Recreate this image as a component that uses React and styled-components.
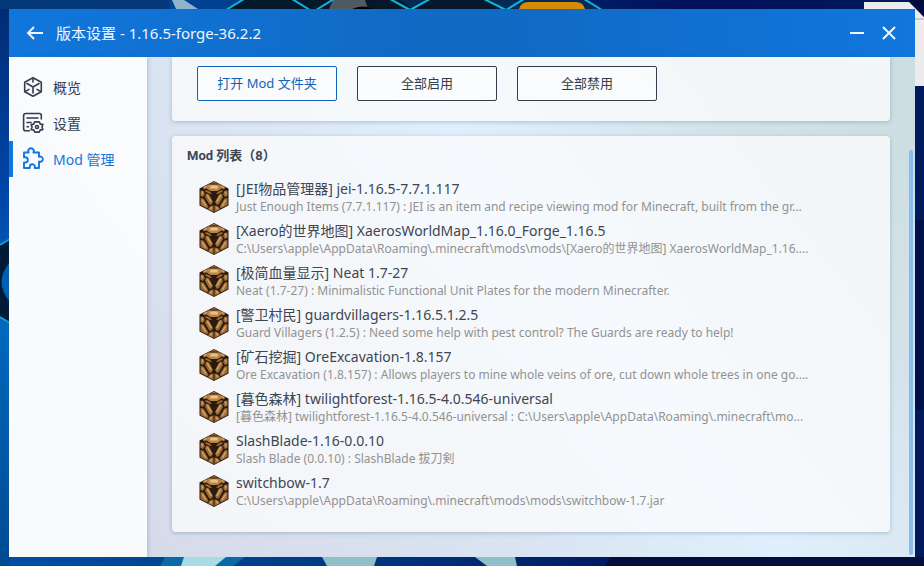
import React from "react";
import styled, { createGlobalStyle } from "styled-components";

const Global = createGlobalStyle`
  * { box-sizing: border-box; }
  body { margin: 0; font-family: "Noto Sans", "Noto Sans CJK SC", sans-serif; color: #3d4652; }
  button { font: inherit; color: inherit; cursor: pointer; }
`;

const Desktop = styled.div`
  display: flex;
  min-height: 100vh;
  padding: 9px;
  position: relative;
  background: #003f91;
`;

const WallpaperArt = styled.svg`
  position: absolute;
  inset: 0;
  width: 100%;
  height: 100%;
`;

const Window = styled.div`
  position: relative;
  flex: 1;
  min-width: 0;
  display: flex;
  flex-direction: column;
  background: linear-gradient(52deg, #d4dae7 5%, #d8deed 22%, #d9e3f1 38%, #e0effd 58%, #d3e2e9 80%, #ccdee1 94%);
`;

const TitleBar = styled.header`
  display: flex;
  align-items: center;
  height: 48px;
  padding: 0 10px 0 14px;
  background: linear-gradient(90deg, #1176db, #1069c2 50%, #1176dd);
  color: #eef6ff;
`;

const WindowTitle = styled.h1`
  flex: 1;
  margin: 0 0 0 9px;
  font-size: 15px;
  font-weight: 400;
  line-height: 24px;
`;

const BarButton = styled.button`
  display: flex;
  align-items: center;
  justify-content: center;
  width: 32px;
  height: 32px;
  padding: 0;
  border: 0;
  background: none;
  svg { display: block; }
`;

const BackButton = styled(BarButton)`
  width: 24px;
`;

const Body = styled.div`
  flex: 1;
  display: flex;
  min-height: 0;
`;

const Sidebar = styled.nav`
  width: 138px;
  padding-top: 12px;
  background: rgba(255, 255, 255, 0.85);
  box-shadow: 1px 0 4px rgba(60, 90, 140, 0.25);
`;

const NavItem = styled.button`
  display: flex;
  align-items: center;
  gap: 7px;
  width: 100%;
  height: 36px;
  padding: 0 0 0 9px;
  border: 0;
  border-left: 4px solid ${(p) => (p.$active ? "#1177dc" : "transparent")};
  background: none;
  color: ${(p) => (p.$active ? "#1177dc" : "#343d4a")};
  font-size: 14px;
  svg { display: block; }
`;

const NavLabel = styled.span`
  padding-bottom: 1px;
`;

const Content = styled.main`
  flex: 1;
  min-width: 0;
  display: flex;
  flex-direction: column;
  gap: 15px;
  padding: 0 19px 25px 25px;
`;

const Card = styled.section`
  padding: 10px 15px 20px;
  border-radius: ${(p) => (p.$flush ? "0 0 4px 4px" : "4px")};
  background: rgba(252, 252, 253, 0.77);
  box-shadow: 0 1px 4px rgba(50, 85, 125, 0.3);
`;

const ActionCard = styled(Card)`
  display: flex;
  gap: 20px;
  padding: 9px 25px 20px;
`;

const ActionButton = styled.button`
  width: 140px;
  height: 35px;
  padding: 0 0 2px;
  border: 1px solid currentColor;
  border-radius: 2px;
  background: rgba(255, 255, 255, 0.45);
  color: ${(p) => (p.$primary ? "#0f64b8" : "#343d4a")};
  font-size: 13px;
`;

const CardTitle = styled.h2`
  margin: 0 0 10px;
  font-family: Roboto, "Noto Sans CJK SC", sans-serif;
  font-size: 13px;
  font-weight: 700;
  line-height: 20px;
`;

const ModList = styled.ul`
  margin: 0;
  padding: 0 0 0 12px;
  list-style: none;
`;

const ModRow = styled.li`
  display: flex;
  gap: 7px;
  height: 42px;
  padding-top: 4px;
`;

const LampIcon = styled.svg`
  flex: none;
  width: 30px;
  height: 32px;
  margin-top: 1px;
`;

const ModText = styled.div`
  min-width: 0;
`;

const ModName = styled.div`
  font-size: 14px;
  line-height: 18px;
  white-space: nowrap;
`;

const ModInfo = styled.div`
  color: #929292;
  font-size: 12px;
  line-height: 18px;
  white-space: nowrap;
`;

const ScrollRail = styled.div`
  display: flex;
  width: 6px;
  padding: 93px 2px 2px 0;
`;

const ScrollThumb = styled.div`
  flex: 1;
  border-radius: 2px;
  background: #88bdec;
`;

function Wallpaper() {
  return (
    <WallpaperArt viewBox="0 0 924 566" preserveAspectRatio="none" aria-hidden="true">
      <defs>
        <linearGradient id="sky" x1="0" x2="1">
          <stop offset="0" stopColor="#004fa5" />
          <stop offset=".35" stopColor="#003b85" />
          <stop offset=".75" stopColor="#00115a" />
          <stop offset="1" stopColor="#001a5c" />
        </linearGradient>
        <linearGradient id="edge" x1="0" x2="0" y1="0" y2="1">
          <stop offset="0" stopColor="#002b72" />
          <stop offset=".35" stopColor="#0047aa" />
          <stop offset=".55" stopColor="#006ac0" />
          <stop offset="1" stopColor="#004a92" />
        </linearGradient>
      </defs>
      <rect width="924" height="566" fill="url(#sky)" />
      <rect width="10" height="566" fill="url(#edge)" />
      <path d="M0 0H170V9H0z" fill="#06397b" />
      <path d="M172 0h12l14 9h-22z" fill="#8fb5cc" />
      <path d="M242 0h280v9H228z" fill="#04182c" />
      <path d="M333 0h32l3 9h-39z" fill="#505a62" />
      <path d="M352 9q10-5 22 0z" fill="#000" />
      <path d="M400 0l13 9 16-9h60l17 9h92l-14-9z" fill="#032a52" />
      <path d="M226 10 244-1M292-1l18 11M316 10l18-11M390-1l20 11 20-11M484-1l22 11 18-11M584-1l18 11" fill="none" stroke="#12b5dc" strokeWidth="2" />
      <path d="M519 9q2-7 9-7h48q7 0 9 7z" fill="#d58b05" />
      <path d="M864 2h45l15 15v69h-10V9h-50z" fill="#ececec" />
      <path d="M909 0h15v17z" fill="#000a3d" />
      <path d="M915 19h9" stroke="#aaa" />
      <path d="M0 245l10-6v84l-10-6z" fill="#001a38" />
      <path d="M0 245l10-6M0 317l10 6" stroke="#159ad5" strokeWidth="2" />
      <path d="M10 262q-17 20 0 40z" fill="#0060b0" />
      <path d="M165 557h80l-12 9H160z" fill="#0a6aa8" />
      <path d="M184 557h42l-11 9h-34z" fill="#a9dbe5" />
      <path d="M322 557h55l-3 9h-47zM475 557h40l2 9h-30z" fill="#92bec9" />
      <path d="M610 557h314v9H605z" fill="#020e3b" />
      <path d="M915 220h9v190h-9z" fill="#001048" />
    </WallpaperArt>
  );
}

function Lamp() {
  return (
    <LampIcon viewBox="0 0 30 32" aria-hidden="true">
      <path d="M15 0l14.500 7.500v17L15 32 .5 24.500v-17z" fill="#2a190e" />
      <g fill="#9a6a36">
        <path d="M10.500 2.600 15 .8l4.500 1.800zM3.500 6.500l6-3-2 4-2.500 1zM26.500 6.500l-6-3 2 4 2.500 1zM7 9l3 1 3 2.500-2 .5-5-2.500zM23 9l-3 1-3 2.500 2 .5 5-2.500z" />
        <path d="M1.500 9.500l3 .5 1.500 3-2 3-2.500-1zM28.500 9.500l-3 .5-1.500 3 2 3 2.500-1z" />
        <path d="M7 12.500l3 1 4 7.500-2 3-2-1-4-7zM23 12.500l-3 1-4 7.500 2 3 2-1 4-7z" />
        <path d="M1.500 17l3 .5 5 8-1.500 2-6.500-3.500zM28.500 17l-3 .5-5 8 1.500 2 6.500-3.500z" />
        <path d="M9 28.200q1.500-3.700 5.500-3.700V31zM21 28.200q-1.500-3.700-5.500-3.700V31z" />
      </g>
      <path d="M9 3.500h12l1.500 4-4 2.500h-7l-4-2.500z" fill="#b98448" />
      <path d="M11.500 4.500h7l.5 3h-8z" fill="#e9c283" />
      <g fill="none" stroke="#d29e5c" strokeWidth="1.600" strokeLinecap="round">
        <path d="M5.500 6.500l2-1M24.500 6.500l-2-1M3.500 11l-.5 2M26.500 11l.5 2M8.500 14.500l3.500 6M21.500 14.500l-3.500 6M3.500 19.500l3 5M26.500 19.500l-3 5M12.500 26.500l-1 1.500M17.500 26.500l1 1.500" />
      </g>
    </LampIcon>
  );
}

const line = {
  fill: "none",
  stroke: "currentColor",
  strokeWidth: 1.6,
  strokeLinecap: "round",
  strokeLinejoin: "round",
  width: 24,
  height: 24,
  viewBox: "0 0 24 24",
  "aria-hidden": true,
};

function CubeIcon() {
  return (
    <svg {...line}>
      <path d="M11 2.800 19.300 7.200v9.600L11 21.200l-8.300-4.400V7.200z" />
      <path d="M11 3v4M5 8.500l6 3.500 6-3.500M11 12v6M3.500 16.400l3.500-2M18.500 16.400l-3.500-2" />
    </svg>
  );
}

function SettingsIcon() {
  return (
    <svg {...line}>
      <path d="M19.300 8V4.500a2 2 0 0 0-2-2H3.600a2 2 0 0 0-2 2v13.300a2 2 0 0 0 2 2H7.500M5 7h11M5 11.500h4M5 15.800h1.500" />
      <path d="M12.700 10.900h4.600l1 2.200 2.500.3 0 .4 -.8 2.200 .8 2.200-.2.400-2.300.3-1.100 2.200h-4.400l-1.100-2.200-2.400-.3-.1-.4 .9-2.200-.9-2.200 .1-.4 2.400-.3z" />
      <circle cx="15" cy="16" r="1.500" />
    </svg>
  );
}

function PuzzleIcon() {
  return (
    <svg {...line} strokeWidth="1.900">
      <path d="M2 5.500h4.600a2.800 2.800 0 1 1 4.800 0H17v4.400a2.600 2.600 0 1 1 0 4.600V21h-4.200v-1.300a2.500 2.500 0 0 0-5 0V21H2v-5.500h1.200a2.600 2.600 0 0 0 0-5.200H2z" />
    </svg>
  );
}

const navItems = [
  { label: "概览", Icon: CubeIcon },
  { label: "设置", Icon: SettingsIcon },
  { label: "Mod 管理", Icon: PuzzleIcon, active: true },
];

const mods = [
  ["[JEI物品管理器] jei-1.16.5-7.7.1.117", "Just Enough Items (7.7.1.117) : JEI is an item and recipe viewing mod for Minecraft, built from the gr..."],
  ["[Xaero的世界地图] XaerosWorldMap_1.16.0_Forge_1.16.5", "C:\\Users\\apple\\AppData\\Roaming\\.minecraft\\mods\\mods\\[Xaero的世界地图] XaerosWorldMap_1.16...."],
  ["[极简血量显示] Neat 1.7-27", "Neat (1.7-27) : Minimalistic Functional Unit Plates for the modern Minecrafter."],
  ["[警卫村民] guardvillagers-1.16.5.1.2.5", "Guard Villagers (1.2.5) : Need some help with pest control? The Guards are ready to help!"],
  ["[矿石挖掘] OreExcavation-1.8.157", "Ore Excavation (1.8.157) : Allows players to mine whole veins of ore, cut down whole trees in one go...."],
  ["[暮色森林] twilightforest-1.16.5-4.0.546-universal", "[暮色森林] twilightforest-1.16.5-4.0.546-universal : C:\\Users\\apple\\AppData\\Roaming\\.minecraft\\mo..."],
  ["SlashBlade-1.16-0.0.10", "Slash Blade (0.0.10) : SlashBlade 拔刀剣"],
  ["switchbow-1.7", "C:\\Users\\apple\\AppData\\Roaming\\.minecraft\\mods\\mods\\switchbow-1.7.jar"],
];

export default function App() {
  return (
    <>
      <Global />
      <Desktop>
        <Wallpaper />
        <Window>
          <TitleBar>
            <BackButton aria-label="返回">
              <svg width="18" height="16" viewBox="0 0 18 16" fill="none" stroke="currentColor" strokeWidth="2">
                <path d="M17 8H2M8 2 2 8l6 6" />
              </svg>
            </BackButton>
            <WindowTitle>版本设置 - 1.16.5-forge-36.2.2</WindowTitle>
            <BarButton aria-label="最小化">
              <svg width="14" height="14" viewBox="0 0 14 14" stroke="currentColor" strokeWidth="2">
                <path d="M0 7h14" />
              </svg>
            </BarButton>
            <BarButton aria-label="关闭">
              <svg width="14" height="14" viewBox="0 0 14 14" stroke="currentColor" strokeWidth="2">
                <path d="M1 1l12 12M13 1 1 13" />
              </svg>
            </BarButton>
          </TitleBar>
          <Body>
            <Sidebar>
              {navItems.map(({ label, Icon, active }) => (
                <NavItem key={label} $active={active}>
                  <Icon />
                  <NavLabel>{label}</NavLabel>
                </NavItem>
              ))}
            </Sidebar>
            <Content>
              <ActionCard $flush>
                <ActionButton $primary>打开 Mod 文件夹</ActionButton>
                <ActionButton>全部启用</ActionButton>
                <ActionButton>全部禁用</ActionButton>
              </ActionCard>
              <Card>
                <CardTitle>Mod 列表（8）</CardTitle>
                <ModList>
                  {mods.map(([name, info]) => (
                    <ModRow key={name}>
                      <Lamp />
                      <ModText>
                        <ModName>{name}</ModName>
                        <ModInfo>{info}</ModInfo>
                      </ModText>
                    </ModRow>
                  ))}
                </ModList>
              </Card>
            </Content>
            <ScrollRail>
              <ScrollThumb />
            </ScrollRail>
          </Body>
        </Window>
      </Desktop>
    </>
  );
}
